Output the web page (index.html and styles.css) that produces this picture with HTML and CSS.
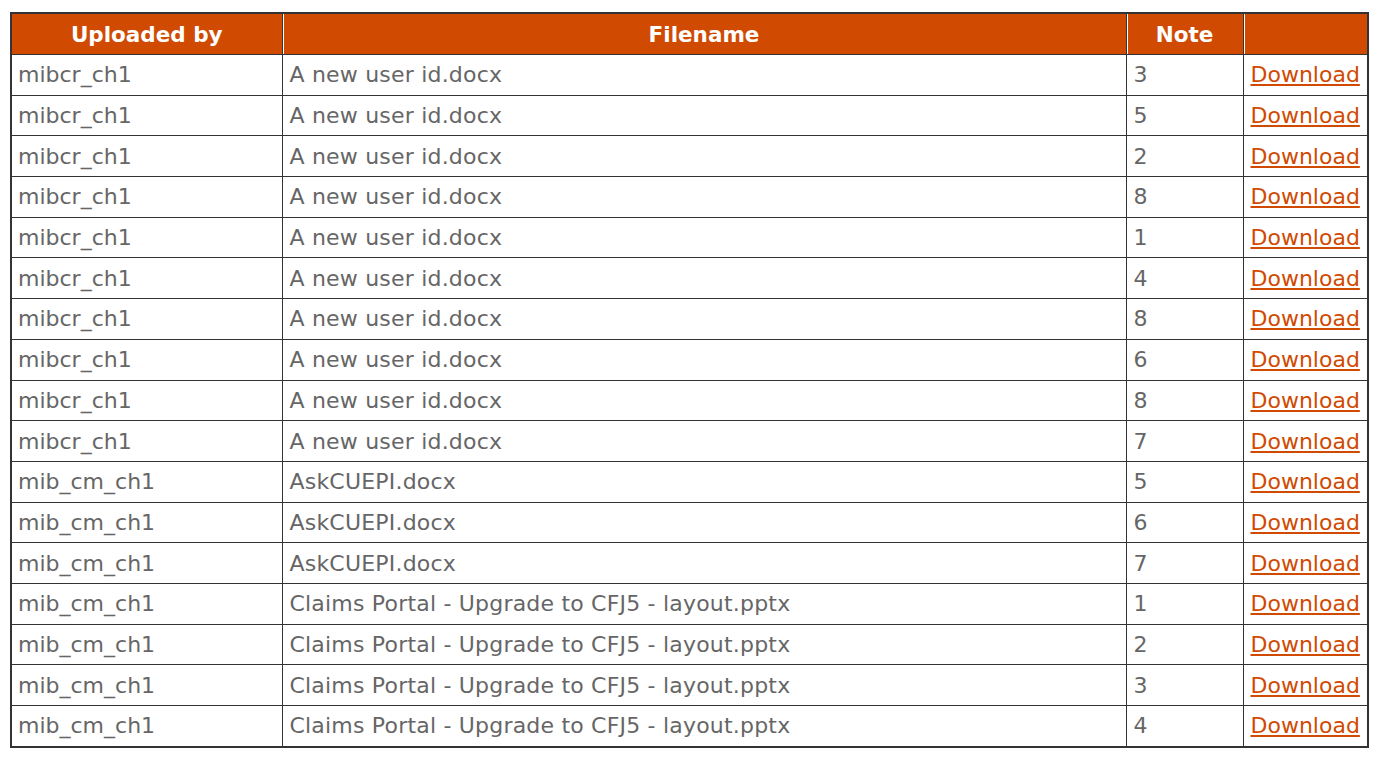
FILE: index.html
```html
<!DOCTYPE html>
<html>
<head>
<meta charset="utf-8">
<link rel="stylesheet" href="styles.css">
</head>
<body>
<table class="files">
<colgroup>
<col class="c-user"><col class="c-file"><col class="c-note"><col class="c-dl">
</colgroup>
<thead>
<tr><th>Uploaded by</th><th>Filename</th><th>Note</th><th></th></tr>
</thead>
<tbody>
<tr><td>mibcr_ch1</td><td>A new user id.docx</td><td>3</td><td><a href="#">Download</a></td></tr>
<tr><td>mibcr_ch1</td><td>A new user id.docx</td><td>5</td><td><a href="#">Download</a></td></tr>
<tr><td>mibcr_ch1</td><td>A new user id.docx</td><td>2</td><td><a href="#">Download</a></td></tr>
<tr><td>mibcr_ch1</td><td>A new user id.docx</td><td>8</td><td><a href="#">Download</a></td></tr>
<tr><td>mibcr_ch1</td><td>A new user id.docx</td><td>1</td><td><a href="#">Download</a></td></tr>
<tr><td>mibcr_ch1</td><td>A new user id.docx</td><td>4</td><td><a href="#">Download</a></td></tr>
<tr><td>mibcr_ch1</td><td>A new user id.docx</td><td>8</td><td><a href="#">Download</a></td></tr>
<tr><td>mibcr_ch1</td><td>A new user id.docx</td><td>6</td><td><a href="#">Download</a></td></tr>
<tr><td>mibcr_ch1</td><td>A new user id.docx</td><td>8</td><td><a href="#">Download</a></td></tr>
<tr><td>mibcr_ch1</td><td>A new user id.docx</td><td>7</td><td><a href="#">Download</a></td></tr>
<tr><td>mib_cm_ch1</td><td>AskCUEPI.docx</td><td>5</td><td><a href="#">Download</a></td></tr>
<tr><td>mib_cm_ch1</td><td>AskCUEPI.docx</td><td>6</td><td><a href="#">Download</a></td></tr>
<tr><td>mib_cm_ch1</td><td>AskCUEPI.docx</td><td>7</td><td><a href="#">Download</a></td></tr>
<tr><td>mib_cm_ch1</td><td>Claims Portal - Upgrade to CFJ5 - layout.pptx</td><td>1</td><td><a href="#">Download</a></td></tr>
<tr><td>mib_cm_ch1</td><td>Claims Portal - Upgrade to CFJ5 - layout.pptx</td><td>2</td><td><a href="#">Download</a></td></tr>
<tr><td>mib_cm_ch1</td><td>Claims Portal - Upgrade to CFJ5 - layout.pptx</td><td>3</td><td><a href="#">Download</a></td></tr>
<tr><td>mib_cm_ch1</td><td>Claims Portal - Upgrade to CFJ5 - layout.pptx</td><td>4</td><td><a href="#">Download</a></td></tr>
</tbody>
</table>
</body>
</html>
```

FILE: styles.css
```css
html, body {
  margin: 0;
  padding: 0;
  background: #fff;
}
body {
  padding: 12px 10px 0 10px;
  font-family: "DejaVu Sans", Verdana, sans-serif;
}
.files {
  width: 1357px;
  border-collapse: collapse;
  table-layout: fixed;
  border: 2px solid #333;
  font-size: 22px;
}
.c-user { width: 271px; }
.c-file { width: 844px; }
.c-note { width: 117px; }
.c-dl { width: 125px; }
.files th {
  background: #d14a02;
  color: #fff;
  font-weight: bold;
  font-size: 21.5px;
  height: 40px;
  padding: 0;
  text-align: center;
  border: 1px solid #333;
  box-shadow: inset 1px 0 0 #fff;
}
.files th:first-child { box-shadow: none; }
.files td {
  color: #666;
  height: 38.7px;
  padding: 1px 6px 0 7px;
  border: 1px solid #333;
  white-space: nowrap;
  overflow: hidden;
  line-height: 1;
}
.files td:first-child {
  padding-left: 6px;
}
.files td:nth-child(2) {
  letter-spacing: 0.2px;
}
.files td a {
  color: #d14a02;
  text-decoration: underline;
}
```
